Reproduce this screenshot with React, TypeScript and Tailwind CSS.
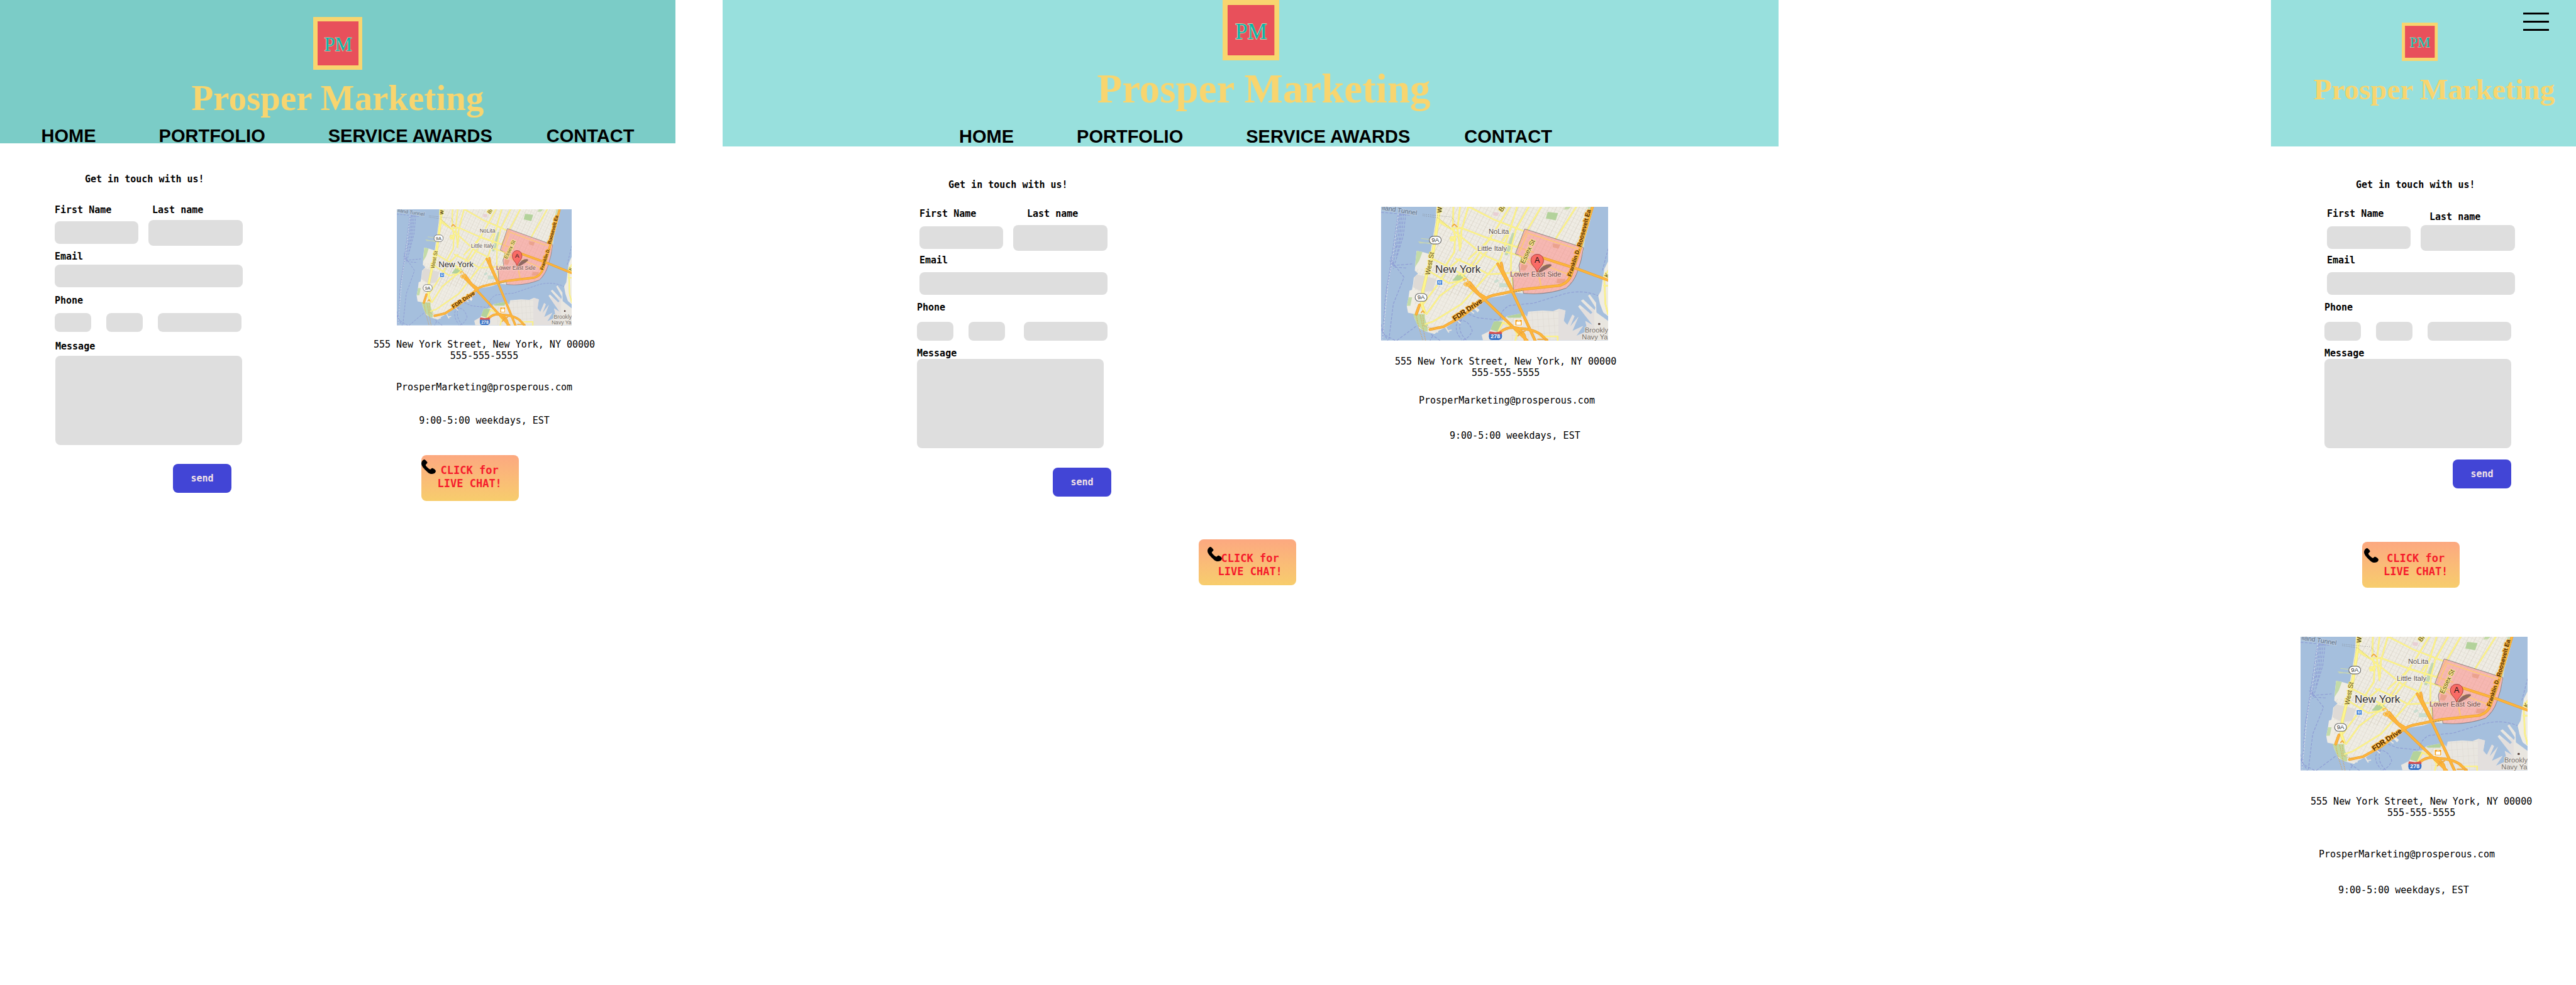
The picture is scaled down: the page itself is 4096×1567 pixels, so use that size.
import { useId } from 'react';

const MONO = "font-['DejaVu_Sans_Mono',monospace]";
const SERIF = "font-['Liberation_Serif',serif]";

function Logo({ className }: { className: string }) {
  return (
    <svg viewBox="0 0 105 112" className={className} role="img" aria-label="Prosper Marketing logo">
      <rect width="105" height="112" fill="#f8d56f" />
      <rect x="10" y="10" width="85.500" height="92" fill="#e8505b" stroke="#e63d55" strokeWidth="1" />
      <text
        x="53"
        y="72"
        textAnchor="middle"
        fontFamily="Liberation Serif, serif"
        fontSize="41"
        fill="#0ab3a8"
        stroke="#d9dcb4"
        strokeWidth="1.500"
        paintOrder="stroke"
      >
        PM
      </text>
    </svg>
  );
}

function PhoneIcon({ className }: { className: string }) {
  return (
    <svg viewBox="0 0 90 90" className={className} aria-hidden="true">
      <path d="M19 0C24 1 31 9 36 16C39 22 35 26 30 29C26 32 26 36 29 40C35 48 43 55 50 60C54 63 57 62 60 59C63 55 67 53 72 55C79 58 86 63 89 69C91 75 88 80 84 84C78 89 68 90 59 90C50 89 40 81 31 71C18 58 2 44 0 26C0 14 8 2 19 0Z" />
    </svg>
  );
}

type MapLabel = { t: string; x: number; y: number; s: number; r?: number; b?: boolean; c: string; h: string };

const LABELS: MapLabel[] = [
  { t: 'lland Tunnel', x: 116, y: 76, s: 14, r: 9, c: '#5d6f86', h: '#b9cbe0' },
  { t: 'W', x: 448, y: 96, s: 13, r: -85, b: true, c: '#5c4a1e', h: '#fbf08a' },
  { t: 'Br', x: 785, y: 92, s: 14, r: -52, c: '#5c4a1e', h: '#fbf08a' },
  { t: 'NoLita', x: 711, y: 220, s: 15, c: '#5e554e', h: '#f6f3ee' },
  { t: 'Little Italy', x: 648, y: 323, s: 15, c: '#5e554e', h: '#f6f3ee' },
  { t: 'New York', x: 413, y: 455, s: 23, c: '#33302e', h: '#f6f3ee' },
  { t: 'Lower East Side', x: 831, y: 474, s: 15, c: '#6b4d48', h: '#f9cfc9' },
  { t: 'West St', x: 383, y: 467, s: 14, r: -79, c: '#5c4a1e', h: '#fbf08a' },
  { t: 'Essex St', x: 910, y: 402, s: 14, r: -65, c: '#5c4a1e', h: '#fbe98a' },
  { t: 'FDR Drive', x: 522, y: 742, s: 15, r: -34, b: true, c: '#4e2c06', h: '#fdb53c' },
  { t: 'Franklin D.', x: 1170, y: 478, s: 12, r: -72, b: true, c: '#4e2c06', h: '#fdb53c' },
  { t: 'Roosevelt Ea', x: 1226, y: 300, s: 13, r: -75, b: true, c: '#4e2c06', h: '#fdb53c' },
  { t: 'K', x: 1374, y: 484, s: 13, r: -60, c: '#5c4a1e', h: '#fbf08a' },
  { t: 'Brookly', x: 1247, y: 811, s: 15, c: '#78706b', h: '#ebe8e2' },
  { t: 'Navy Ya', x: 1231, y: 850, s: 15, c: '#78706b', h: '#ebe8e2' },
];

const MANHATTAN =
  'M420 59L415 150L402 235L392 300L386 342L348 330L310 322L304 380L300 440L318 458L294 482L290 520L284 555L270 560L264 606L255 650L262 692L292 698L300 730L325 785L365 805L410 818L430 800L480 775L545 730L600 695L628 665L650 690L660 675L640 655L690 620L720 602L800 588L850 570L900 575L960 580L1070 565L1143 545L1180 500L1210 440L1238 330L1248 250L1275 150L1297 59Z';
const BROOKLYN =
  'M672 825L718 800L740 745L790 738L812 712L905 693L925 715L932 685L1012 678L1070 682L1104 668L1140 678L1130 740L1150 765L1178 703L1190 712L1165 775L1212 715L1178 800L1238 770L1200 830L1262 800L1250 740L1290 765L1210 655L1220 645L1280 700L1290 690L1225 620L1238 612L1302 676L1306 660L1265 590L1275 583L1310 632L1312 690L1377 740L1377 857L680 857Z';
const EAST = 'M1377 385L1356 430L1346 500L1338 560L1322 590L1332 640L1350 690L1377 712Z';

const YELLOW = [
  'M602 59L740 135L905 203',
  'M430 130L520 205L640 310L680 345L765 385',
  'M437 150L500 190L560 185L690 240L870 300',
  'M515 59L512 180L525 240L520 330L475 405',
  'M552 59L538 190L552 320',
  'M598 59L560 200L555 300',
  'M720 300L620 430L560 470',
  'M830 59L745 205L600 430L545 465',
  'M725 245L600 370',
  'M870 59L832 190L770 395',
  'M832 190L790 260',
  'M935 59L865 190L838 300L835 440L848 530',
  'M1005 59L870 300',
  'M1200 59L1085 250',
  'M400 370L560 460L580 490',
  'M530 370L640 420L708 462L820 455L884 450',
  'M360 430L490 515L565 500',
  'M765 390L708 462L560 640L400 745L358 760',
  'M340 650L430 520L475 440L552 370',
  'M365 700L440 590L580 480',
  'M710 250L870 300L960 330',
  'M748 310L880 350L985 430',
  'M985 440L1003 530',
  'M765 805L790 750L850 780L870 820L860 857',
  'M1000 833L1096 833L1096 857',
  'M1377 440L1355 480L1358 540L1362 640L1377 700',
  'M1355 530L1377 530',
  'M500 262L530 235M498 250C498 235 520 235 520 250C520 265 500 265 500 250',
];

const ORANGE = [
  'M385 792L460 775L560 715L690 610Q715 590 760 582L900 552L1100 530Q1150 520 1170 470L1215 330L1290 59',
  'M762 400L850 580L970 857',
  'M782 395L790 440L850 570',
  'M590 520L690 615L850 780L925 857',
  'M605 510L655 575L700 605',
  'M985 355L1210 432L1377 497',
  'M780 805Q820 770 880 785Q960 790 1000 820L1035 857',
  'M850 780Q915 800 915 857',
  'M308 700L326 645',
];

function CityMap({ w, h, className }: { w: number; h: number; className: string }) {
  const id = useId();
  const kx = w / 1265;
  const ky = h / 798;
  const px = (x: number) => (x - 112) * kx;
  const py = (y: number) => (y - 59) * ky;
  const fs = w / 484;
  const land = `${id}land`;
  const gridA = `${id}a`;
  const gridB = `${id}b`;
  const zone = 'M912 191L1240 303Q1230 380 1205 450Q1185 510 1143 545Q1060 578 960 579L905 576L902 555L850 565L845 470L885 452L880 410L896 355L860 340Z';
  return (
    <svg viewBox={`0 0 ${w} ${h}`} className={className} role="img" aria-label="Map of New York, Lower East Side">
      <defs>
        <clipPath id={land}>
          <path d={MANHATTAN + BROOKLYN + EAST} />
        </clipPath>
        <pattern id={gridA} width="38" height="24" patternUnits="userSpaceOnUse" patternTransform="rotate(26)">
          <path d="M0 0H38M0 0V24M19 0V24" stroke="#d5cfc2" strokeWidth="2.500" fill="none" />
        </pattern>
        <pattern id={gridB} width="30" height="42" patternUnits="userSpaceOnUse" patternTransform="rotate(-4)">
          <path d="M0 0H30M0 0V42" stroke="#d5cfc8" strokeWidth="2.500" fill="none" />
        </pattern>
      </defs>
      <rect width={w} height={h} fill="#a5bfdd" />
      <g transform={`scale(${kx} ${ky}) translate(-112 -59)`}>
        <g fill="none" stroke="#8d9bd4" strokeWidth="4" strokeDasharray="16 8">
          <path d="M112 92L205 100L275 110" />
          <path d="M205 110L170 370L135 610L120 857" />
          <path d="M222 75L208 230L180 400" />
          <path d="M240 75L226 230L196 360" />
          <path d="M252 75L236 230L180 430" />
          <path d="M215 80L190 300L140 560" />
          <path d="M230 75L214 260L196 310" />
          <path d="M175 390L240 480L180 640L155 857" />
          <path d="M165 360L180 410L285 400" />
          <path d="M160 380L190 420L260 425" />
          <path d="M112 760L125 820L190 857" />
          <path d="M112 790L150 857" />
          <path d="M200 857L310 770" />
          <path d="M390 820L440 857M400 830L385 857" />
          <path d="M545 740Q600 730 620 800Q600 850 560 857" />
          <path d="M560 730Q530 800 590 857" />
          <path d="M545 735Q510 790 560 850" />
          <path d="M600 700L650 722L770 735" />
          <path d="M775 730Q780 670 830 648L960 635L1130 580Q1230 550 1322 590" />
          <path d="M1345 440L1377 310" />
        </g>
        <path d="M208 100L180 340L150 520L120 857" fill="none" stroke="#e9e9ee" strokeWidth="3" strokeDasharray="10 8" />
        <path d="M320 268L400 282M335 248L400 256M325 275L395 275" stroke="#c5d4b4" strokeWidth="5" />
        <path d={MANHATTAN} fill="#efece4" />
        <path d={BROOKLYN} fill="#e9e6e0" />
        <path d={EAST} fill="#efece4" />
        <g clipPath={`url(#${land})`}>
          <rect x="400" y="59" width="900" height="530" fill={`url(#${gridA})`} />
          <rect x="300" y="430" width="560" height="370" fill={`url(#${gridA})`} opacity="0.700" />
          <rect x="840" y="670" width="260" height="190" fill={`url(#${gridB})`} />
          <path d="M300 460L420 490L400 560L345 570L290 540Z" fill="#dedad6" />
          <path d="M1100 668H1300V857H1100Z" fill="#dfdcdb" opacity="0.700" />
          <path d="M1140 59H1170L1155 75H1130Z" fill="#c3dba8" />
          <path d="M1040 90L1098 97L1085 140L1030 128Z" fill="#b3d29b" />
          <path d="M560 455L590 480L575 500L508 500L535 465Z" fill="#b3d29b" />
          <path d="M842 215L860 215L835 310L815 350L800 345Z" fill="#bfd7b4" />
          <path d="M310 322H345L325 380L300 420Z" fill="#c3dba8" />
          <path d="M262 600L285 600L275 650L255 650Z" fill="#c3dba8" />
          <path d="M1297 59L1248 250L1240 300L1225 300L1265 59Z" fill="#c9dcb8" />
          <path d="M740 740L790 745L760 805L715 790Z" fill="#b3d29b" />
          <path d="M812 712L905 690L890 722L820 722Z" fill="#b3d29b" />
          <path d="M770 515H830V540H770ZM740 505L760 490L770 500L750 515Z" fill="#c9ddd0" />
          <path d="M610 390L630 385L630 405L615 410ZM740 90L770 95L760 115L735 110Z" fill="#e8cfd4" />
        </g>
        <path d="M290 698L355 700Q355 750 375 765L370 805Q335 800 310 755Z" fill="#c0d8a0" />
        <path d="M365 770H430V810H390Z" fill="#e8e5df" />
        <path d="M470 775L490 810M480 800L505 795M520 720L555 755M610 680L630 695" stroke="#e8e5df" strokeWidth="7" />
        <g fill="none" strokeLinejoin="round" strokeLinecap="round">
          <g stroke="#f1e27a" strokeWidth="9">
            {YELLOW.map((d) => (
              <path key={d} d={d} />
            ))}
          </g>
          <g stroke="#fdf58c" strokeWidth="6">
            {YELLOW.map((d) => (
              <path key={d} d={d} />
            ))}
          </g>
          <path d="M437 59L430 130L412 260L395 370L365 470L345 560L338 640L355 690" stroke="#efdf70" strokeWidth="17" />
          <path d="M437 59L430 130L412 260L395 370L365 470L345 560L338 640L355 690" stroke="#fdf58c" strokeWidth="13" />
        </g>
        <path d={zone} fill="#fb8d89" fillOpacity="0.550" stroke="#777" strokeWidth="3" />
        <path d="M1070 278L1110 285L1100 310L1068 300ZM895 400L930 410L915 440L888 435ZM1095 490L1140 490L1135 515L1088 515Z" fill="#e79a80" opacity="0.700" />
        <path d="M925 225L880 335M925 215L1170 300L1205 310M985 430L1003 530M880 350L1150 460" fill="none" stroke="#fcc87a" strokeWidth="7" />
        <g fill="none" strokeLinejoin="round" strokeLinecap="round">
          <g stroke="#e79a2c" strokeWidth="16">
            {ORANGE.map((d) => (
              <path key={d} d={d} />
            ))}
          </g>
          <g stroke="#fdb53c" strokeWidth="12">
            {ORANGE.map((d) => (
              <path key={d} d={d} />
            ))}
          </g>
          <g stroke="#f0a93a" strokeWidth="7">
            <path d="M508 175L520 163L535 178" />
            <path d="M575 498Q565 485 585 488Q605 495 590 510Q565 515 580 530Q605 540 605 510" stroke="#fbc250" />
            <path d="M336 690L345 680L352 690M875 830L890 810L915 800M985 850H1040" />
          </g>
        </g>
        <path d="M308 705L320 770L345 857M330 705L345 780L360 857M345 705L350 770L410 790" fill="none" stroke="#e79a2c" strokeWidth="4" strokeDasharray="4 6" />
        <path d="M345 103L430 112L505 120L525 150M345 112L430 125L500 190" fill="none" stroke="#777" strokeWidth="3" strokeDasharray="3 7" />
        <path d="M848 567L905 558" stroke="#777" strokeWidth="3" strokeDasharray="8 6" />
        <path d="M985 455Q1000 415 1035 403Q1070 398 1060 412Q1040 430 985 458Z" fill="#4a3530" opacity="0.600" />
        <path d="M982 460C980 420 947 412 947 380C947 330 1017 330 1017 380C1017 412 984 420 982 460Z" fill="#f96b66" stroke="#8e2b2b" strokeWidth="3" />
        <rect x="424" y="496" width="30" height="30" rx="3" fill="#1f6fd6" stroke="#fff" strokeWidth="3" />
        <path d="M431 502H447V516H431ZM431 520H436V523H431ZM442 520H447V523H442Z" fill="#fff" />
        <path d="M434 505H444V511H434Z" fill="#1f6fd6" />
        <rect x="858" y="732" width="40" height="38" rx="3" fill="#f5a21c" stroke="#fff" strokeWidth="4" />
        <path d="M866 745H891V764H866Z" fill="#fff" />
        <path d="M873 745V739H884V745" fill="none" stroke="#fff" strokeWidth="3" />
        <rect x="1320" y="751" width="15" height="15" fill="#553f35" stroke="#fff" strokeWidth="3" />
        <path d="M712 815Q705 857 730 857H768Q795 850 786 815Z" fill="#3a72c4" stroke="#fff" strokeWidth="3" />
        <path d="M712 818L716 803L749 808L782 803L787 818Z" fill="#d9534f" />
        <rect x="381" y="235" width="66" height="46" rx="22" fill="#fff" stroke="#666" strokeWidth="4" />
        <rect x="302" y="577" width="66" height="46" rx="22" fill="#fff" stroke="#666" strokeWidth="4" />
      </g>
      <g fontFamily="Liberation Sans, sans-serif" strokeLinejoin="round">
        {LABELS.map((l) => (
          <text
            key={l.t}
            x={px(l.x)}
            y={py(l.y)}
            fontSize={l.s * fs}
            fontWeight={l.b ? 700 : 400}
            fill={l.c}
            stroke={l.h}
            strokeWidth="3"
            paintOrder="stroke"
            transform={l.r ? `rotate(${l.r} ${px(l.x)} ${py(l.y)})` : undefined}
          >
            {l.t}
          </text>
        ))}
        <g textAnchor="middle" fill="#333">
          <text x={px(414)} y={py(270)} fontSize={13 * fs}>9A</text>
          <text x={px(335)} y={py(612)} fontSize={13 * fs}>9A</text>
          <text x={px(982)} y={py(394)} fontSize={17 * fs} fill="#111">A</text>
          <text x={px(749)} y={py(845)} fontSize={12 * fs} fontWeight="700" fill="#fff">278</text>
        </g>
      </g>
    </svg>
  );
}

function Nav({ className }: { className: string }) {
  return (
    <nav className={`flex gap-[86px] font-['Liberation_Sans',sans-serif] text-[29px] leading-6 font-bold whitespace-nowrap text-black ${className}`}>
      <a href="#home" className="mr-3.5">HOME</a>
      <a href="#portfolio" className="mr-3.5">PORTFOLIO</a>
      <a href="#service-awards">SERVICE AWARDS</a>
      <a href="#contact">CONTACT</a>
    </nav>
  );
}

type FormStyle = {
  title: string;
  names: string;
  firstInput: string;
  lastLabel: string;
  lastInput: string;
  email: string;
  emailInput: string;
  phone: string;
  phoneRow: string;
  prefix: string;
  message: string;
  textarea: string;
  send: string;
};

const FIELD = 'block rounded-lg bg-[#dedede] px-3 outline-none';

function ContactForm({ s, className }: { s: FormStyle; className: string }) {
  const id = useId();
  return (
    <form className={`flex flex-col text-[15px] leading-[18px] font-bold text-black ${MONO} ${className}`} onSubmit={(e) => e.preventDefault()}>
      <h2 className={`whitespace-nowrap ${s.title}`}>Get in touch with us!</h2>
      <div className={`flex gap-4 ${s.names}`}>
        <div className="w-[133px]">
          <label htmlFor={`${id}f`} className="block">First Name</label>
          <input id={`${id}f`} type="text" className={`h-9 w-full ${FIELD} ${s.firstInput}`} />
        </div>
        <div className="w-[150px]">
          <label htmlFor={`${id}l`} className={`block ${s.lastLabel}`}>Last name</label>
          <input id={`${id}l`} type="text" className={`h-[41px] w-full ${FIELD} ${s.lastInput}`} />
        </div>
      </div>
      <div className={s.email}>
        <label htmlFor={`${id}e`} className="block">Email</label>
        <input id={`${id}e`} type="email" className={`h-9 w-[299px] ${FIELD} ${s.emailInput}`} />
      </div>
      <div className={s.phone}>
        <label htmlFor={`${id}p`} className="block">Phone</label>
        <div className={`flex ${s.phoneRow}`}>
          <input id={`${id}p`} type="tel" aria-label="Area code" className={`h-[30px] w-[58px] ${FIELD}`} />
          <input type="tel" aria-label="Phone prefix" className={`ml-6 h-[30px] w-[58px] ${FIELD} ${s.prefix}`} />
          <input type="tel" aria-label="Line number" className={`h-[30px] w-[133px] ${FIELD}`} />
        </div>
      </div>
      <div className={s.message}>
        <label htmlFor={`${id}m`} className="block">Message</label>
        <textarea id={`${id}m`} className={`h-[142px] w-[297px] resize-none ${FIELD} ${s.textarea}`} />
      </div>
      <button type="submit" className={`h-[46px] w-[93px] rounded-lg bg-[#4245d6] text-[#f3e3e6] ${s.send}`}>
        send
      </button>
    </form>
  );
}

function ChatButton({ className, icon, text }: { className: string; icon: string; text: string }) {
  return (
    <button
      type="button"
      className={`flex h-[73px] w-[155px] items-start rounded-lg bg-linear-to-b from-[#fca880] to-[#f7cd6c] text-[17px] leading-[21px] font-bold text-[#f51b2c] ${MONO} ${className}`}
    >
      <PhoneIcon className={`size-[23px] shrink-0 fill-black ${icon}`} />
      <span className={`text-center whitespace-nowrap ${text}`}>
        CLICK for
        <br />
        LIVE CHAT!
      </span>
    </button>
  );
}

function Info({ className, address, email, hours }: { className: string; address: string; email: string; hours: string }) {
  return (
    <div className={`flex flex-col text-[15px] leading-[18px] whitespace-nowrap text-black ${MONO} ${className}`}>
      <address className={`text-center not-italic ${address}`}>
        555 New York Street, New York, NY 00000
        <br />
        555-555-5555
      </address>
      <a href="mailto:ProsperMarketing@prosperous.com" className={email}>ProsperMarketing@prosperous.com</a>
      <p className={hours}>9:00-5:00 weekdays, EST</p>
    </div>
  );
}

const TABLET: FormStyle = {
  title: 'ml-12',
  names: 'mt-[31px]',
  firstInput: 'mt-[9px]',
  lastLabel: 'pl-1.5',
  lastInput: 'mt-[7px]',
  email: 'mt-2',
  emailInput: 'mt-1',
  phone: 'mt-3',
  phoneRow: 'mt-[11px]',
  prefix: 'mr-6',
  message: 'mt-3.5 pl-px',
  textarea: 'mt-1.5',
  send: 'mt-[30px] ml-[188px]',
};

const DESKTOP: FormStyle = {
  title: 'ml-[50px]',
  names: 'mt-7 ml-1',
  firstInput: 'mt-[11px]',
  lastLabel: 'pl-[22px]',
  lastInput: 'mt-[9px]',
  email: 'mt-1.5 ml-1',
  emailInput: 'mt-2.5',
  phone: 'mt-[11px]',
  phoneRow: 'mt-3.5',
  prefix: 'mr-[30px]',
  message: 'mt-[11px]',
  textarea: 'mt-0',
  send: 'mt-[31px] ml-[216px]',
};

const MOBILE: FormStyle = {
  ...DESKTOP,
  lastLabel: 'pt-[5px] pl-3.5',
  lastInput: 'mt-1',
  prefix: 'mr-6',
  send: 'mt-[18px] ml-[204px]',
};

export default function App() {
  return (
    <main className="grid min-h-screen grid-cols-[1074fr_75fr_1679fr_783fr_485fr] items-start overflow-hidden bg-white">
      <section className="col-start-1">
        <header className="flex flex-col items-center bg-[#7bccc7] pt-[27px]">
          <Logo className="h-[84px]" />
          <h1 className={`mt-[13px] text-[57px] leading-[64px] font-bold whitespace-nowrap text-[#f8d56f] ${SERIF}`}>Prosper Marketing</h1>
          <Nav className="mt-4" />
        </header>
        <div className="grid grid-cols-[87fr_299px_209fr_350px_129fr] items-start">
          <ContactForm s={TABLET} className="col-start-2 pt-12" />
          <div className="col-start-4 flex flex-col items-center pt-[105px]">
            <CityMap w={372} h={247} className="w-[278px]" />
            <Info className="items-center" address="mt-[21px]" email="mt-8" hours="mt-[35px]" />
            <ChatButton className="mt-[46px] mr-[46px]" icon="mt-[7px]" text="mt-3.5 ml-[3px]" />
          </div>
        </div>
      </section>

      <section className="col-start-3">
        <header className="flex flex-col items-center bg-[#98e0dd] pb-1">
          <Logo className="h-24" />
          <h1 className={`mt-[13px] pl-[42px] text-[65px] leading-[64px] font-bold whitespace-nowrap text-[#f8d56f] ${SERIF}`}>Prosper Marketing</h1>
          <Nav className="mt-8 pl-4" />
        </header>
        <div className="grid grid-cols-[309fr_304px_434fr_373px_259fr] items-start">
          <ContactForm s={DESKTOP} className="col-start-2 pt-[52px]" />
          <div className="col-start-4 pt-24">
            <CityMap w={484} h={285} className="w-[361px]" />
            <Info className="items-start" address="mt-6 ml-[22px]" email="mt-[26px] ml-[60px]" hours="mt-[38px] ml-[109px]" />
          </div>
        </div>
        <div className="mt-[68px] flex justify-center pr-[11px]">
          <ChatButton className="" icon="mt-3 ml-3.5" text="mt-5 -ml-1.5" />
        </div>
      </section>

      <section className="col-start-5">
        <header className="flex flex-col items-center bg-[#98e0dd] pt-5 pb-[67px]">
          <div className="flex w-full items-start pr-[11px]">
            <span className="flex-1" />
            <Logo className="mt-4 h-[61px]" />
            <div className="flex flex-1 justify-end">
              <button type="button" aria-label="Open menu" className="mr-8 flex w-[41px] flex-col gap-2.5">
                <span className="h-[3px] w-full bg-black" />
                <span className="h-[3px] w-full bg-black" />
                <span className="h-[3px] w-full bg-black" />
              </button>
            </div>
          </div>
          <h1 className={`mt-[22px] pl-[34px] text-[47px] leading-[47px] font-bold whitespace-nowrap text-[#f8d56f] ${SERIF}`}>Prosper Marketing</h1>
        </header>
        <ContactForm s={MOBILE} className="pt-[52px] pl-[85px]" />
        <ChatButton className="mt-[85px] ml-[145px]" icon="mt-2.5 ml-[3px]" text="mt-4 ml-2" />
        <CityMap w={484} h={285} className="mt-[78px] ml-[47px] w-[361px]" />
        <Info className="items-start" address="mt-10 ml-[63px]" email="mt-12 ml-[76px]" hours="mt-[39px] ml-[107px]" />
      </section>
    </main>
  );
}
